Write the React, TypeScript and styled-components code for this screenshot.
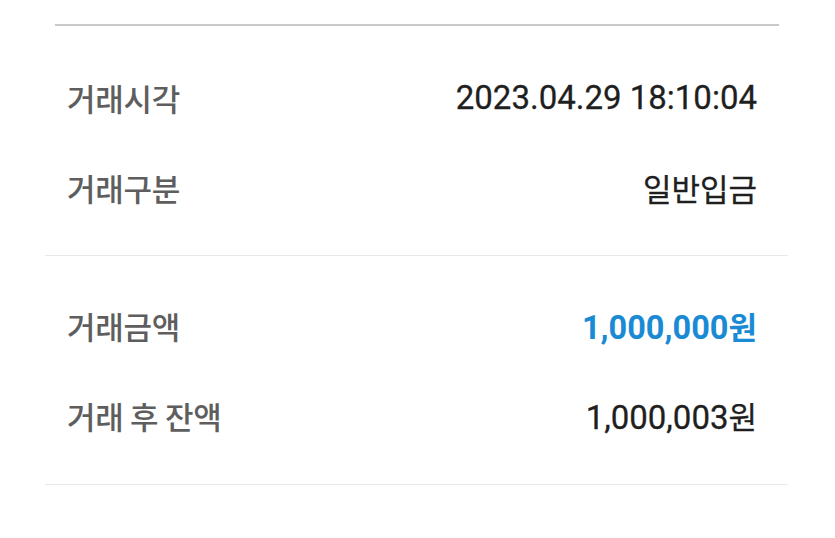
import React from "react";
import styled, { createGlobalStyle } from "styled-components";

const Global = createGlobalStyle`
  html, body { margin: 0; padding: 0; background: #ffffff; }
  body { font-family: Roboto, "Noto Sans CJK KR", sans-serif; }
`;

const Page = styled.div`
  padding: 24px 47px 0 45px;
  background: #ffffff;
`;

const TopLine = styled.div`
  height: 2px;
  margin: 0 9px 0 10px;
  background: #c9c9c9;
`;

const Section = styled.section<{ $top: number; $bottom: number }>`
  padding: ${(p) => p.$top}px 0 ${(p) => p.$bottom}px;
`;

const Divider = styled.div`
  height: 1px;
  background: #e8e8e8;
`;

const Row = styled.div`
  height: 90px;
  display: flex;
  align-items: center;
  justify-content: space-between;
  padding: 0 31px 0 22px;
`;

const Label = styled.span`
  font-family: "Noto Sans CJK KR", sans-serif;
  font-size: 31px;
  font-weight: 500;
  color: #5e5e5e;
  letter-spacing: -0.3px;
`;

const Value = styled.span<{ $accent?: boolean }>`
  font-family: Roboto, "Noto Sans CJK KR", sans-serif;
  font-size: ${(p) => (p.$accent ? 32.5 : 33)}px;
  font-weight: ${(p) => (p.$accent ? 700 : 400)};
  color: ${(p) => (p.$accent ? "#1a8ad4" : "#1f1f1f")};
  -webkit-text-stroke: ${(p) => (p.$accent ? "0" : "0.3px")};
`;

const Won = styled.span`
  font-family: "Noto Sans CJK KR", sans-serif;
  font-size: 31px;
`;

export default function App() {
  return (
    <>
      <Global />
      <Page>
        <TopLine />
        <Section $top={26} $bottom={23}>
          <Row>
            <Label>거래시각</Label>
            <Value>2023.04.29 18:10:04</Value>
          </Row>
          <Row>
            <Label>거래구분</Label>
            <Value>
              <Won>일반입금</Won>
            </Value>
          </Row>
        </Section>
        <Divider />
        <Section $top={24} $bottom={24}>
          <Row>
            <Label>거래금액</Label>
            <Value $accent>
              1,000,000<Won>원</Won>
            </Value>
          </Row>
          <Row>
            <Label>거래 후 잔액</Label>
            <Value>
              1,000,003<Won>원</Won>
            </Value>
          </Row>
        </Section>
        <Divider />
      </Page>
    </>
  );
}
